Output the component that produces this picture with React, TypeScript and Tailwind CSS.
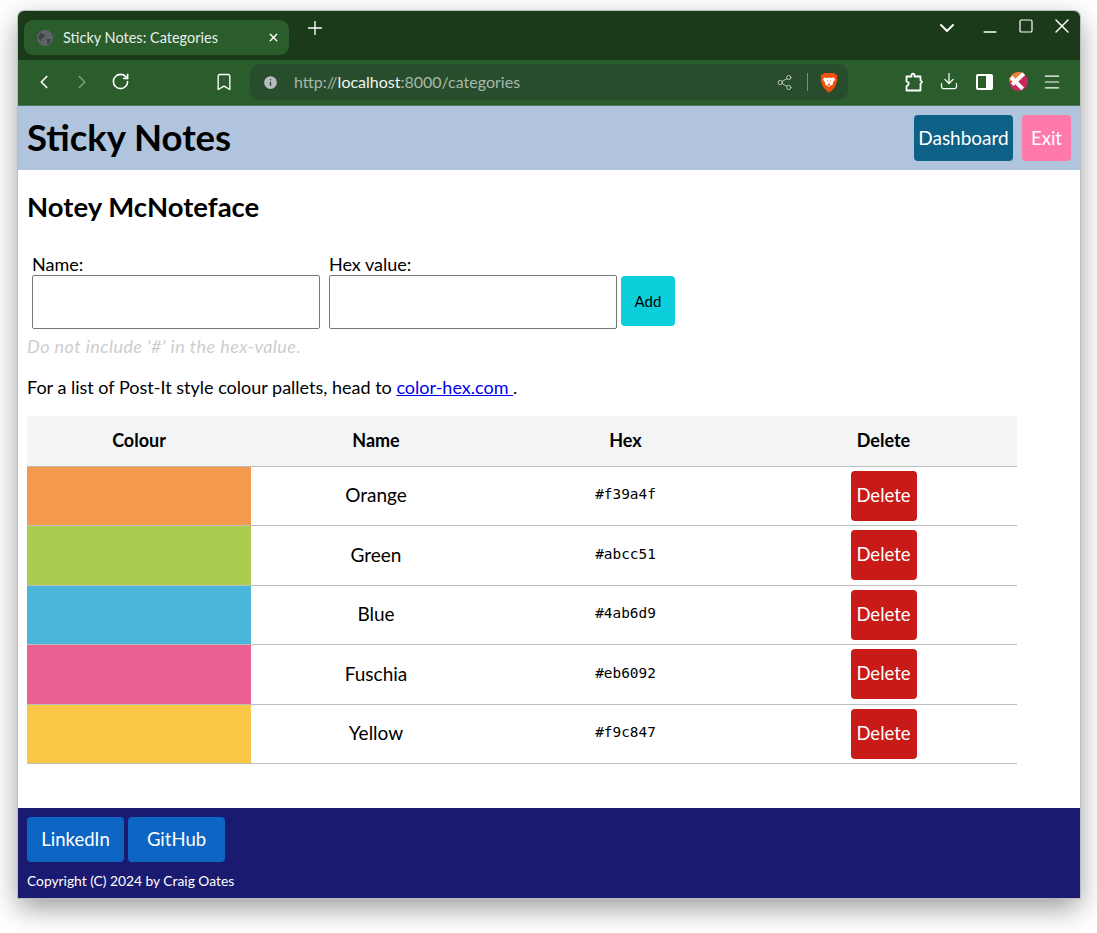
import { ChevronDown, ChevronLeft, ChevronRight, Download, Menu, Plus, RotateCw, Bookmark, Share2, Minus, Square, X, Info } from 'lucide-react';

const categories = [
  { name: 'Orange', hex: '#f39a4f', rowClass: 'h-[59px]' },
  { name: 'Green', hex: '#abcc51', rowClass: 'h-[60px]' },
  { name: 'Blue', hex: '#4ab6d9', rowClass: 'h-[59px]' },
  { name: 'Fuschia', hex: '#eb6092', rowClass: 'h-[60px]' },
  { name: 'Yellow', hex: '#f9c847', rowClass: 'h-[59px]' },
];

function BraveIcon() {
  return (
    <svg width="18" height="21" viewBox="0 0 18 21">
      <path d="M4 1h10l1.500 1.500L17.500 3 16.800 6 17.500 8 15 15l-4.500 4.500L9 20.500 7.500 19.500 3 15 .5 8 1.200 6 .5 3 2.500 2.500z" fill="#f1500f" />
      <path d="M4 5.500l3 .5 2-.5 2 .5 3-.5 1 2-2 3-.5 2.500-2 .5L9 15l-1.500-1.500-2-.5L5 10.500l-2-3z" fill="#fff" />
      <path d="M7 9h1M10 9h1M8 12h2l-1 1.500z" stroke="#f1500f" strokeWidth="1" fill="none" />
    </svg>
  );
}

function AvatarIcon() {
  return (
    <svg width="19" height="19" viewBox="0 0 18 18">
      <circle cx="9" cy="9" r="9" fill="#c4285f" />
      <path d="M0 9a9 9 0 0 1 9-9h3L7 9z" fill="#e9803c" />
      <path d="M2 5l11 11M14 1.500L3 12" stroke="#fff" strokeWidth="3.800" fill="none" />
    </svg>
  );
}

function ExtensionIcon() {
  return (
    <svg width="19" height="20" viewBox="0 0 19 20" fill="none" stroke="#fff" strokeWidth="1.800" strokeLinejoin="round">
      <path d="M1.500 4.500H6.500V2.500Q8 .8 9.500 2.500V4.500H15.500V8.500Q18.500 9.500 15.500 11.500V18.500H1.500V14.500Q4.500 12 3.500 10.500L1.500 9.500z" />
    </svg>
  );
}

function TabBar() {
  return (
    <div className="h-[49px] bg-[#1a3a1a] rounded-t-[6px] flex items-start pl-[6px] pr-[6px] pt-[9px] text-white">
      <div className="w-[265px] h-[35px] rounded-[9px] bg-[#2a5c2c] flex items-center pl-[13px] pr-[9px]">
        <svg width="16" height="16" viewBox="0 0 16 16" className="shrink-0">
          <circle cx="8" cy="8" r="8" fill="#5f6368" />
          <path d="M3 3l4 1 1 3-3 1-1 3-3-3zM10 9l4 0-2 5-2-1z" fill="#3e4347" />
        </svg>
        <span className="ml-[10px] text-[14.500px] text-[#e8efe8] flex-1">Sticky Notes: Categories</span>
        <X size={13} strokeWidth={2.500} />
      </div>
      <Plus size={22} strokeWidth={1.500} className="ml-[15px] mt-[-3px]" />
      <div className="ml-auto flex items-start">
        <ChevronDown size={24} strokeWidth={2} className="mt-[-4px]" />
        <Minus size={20} strokeWidth={1.800} className="ml-[21px] mt-[2px]" />
        <Square size={16} strokeWidth={1.800} className="ml-[18px] mt-[-2px]" />
        <X size={24} strokeWidth={1.500} className="ml-[16px] mt-[-6px]" />
      </div>
    </div>
  );
}

function Toolbar() {
  return (
    <div className="h-[46px] bg-[#2a5c2c] flex items-start pt-[4px] text-white border-b border-[#4a7a5a]">
      <ChevronLeft size={22} strokeWidth={1.800} className="ml-[15px] mt-[7px]" />
      <ChevronRight size={22} strokeWidth={1.800} className="ml-[16px] mt-[7px] text-[#7c9c7d]" />
      <RotateCw size={19} strokeWidth={2} className="ml-[18px] mt-[8px]" />
      <Bookmark size={20} strokeWidth={1.600} className="ml-[84px] mt-[8px]" />
      <div className="ml-[16px] w-[598px] h-[36px] rounded-[10px] bg-[#284d2c] flex items-center pl-[12px] pr-[10px] text-[16px]">
        <Info size={17} className="fill-[#b8bcc0] text-[#284d2c]" />
        <span className="ml-[15px] text-[#a9b8aa]">
          http://<span className="text-[#f1f5f1]">localhost</span>:8000/categories
        </span>
        <Share2 size={17} strokeWidth={1.300} className="ml-auto text-[#c5cdc5]" />
        <div className="w-px h-[18px] bg-[#7c8f7d] ml-[14px] mr-[12px]" />
        <BraveIcon />
      </div>
      <div className="ml-[57px] mt-[8px]"><ExtensionIcon /></div>
      <Download size={20} strokeWidth={1.500} className="ml-[15px] mt-[7px]" />
      <div className="ml-[17px] mt-[10px] w-[17px] h-[16px] border-2 border-white rounded-[2px] flex justify-end">
        <div className="w-[5px] bg-white" />
      </div>
      <div className="ml-[16px] mt-[8px]"><AvatarIcon /></div>
      <Menu size={20} strokeWidth={1.400} className="ml-[14px] mt-[8px]" />
    </div>
  );
}

export default function App() {
  return (
    <div className="min-h-[933px] bg-white pt-[11px] px-[18px] font-['Lato',sans-serif] text-black">
      <div className="w-[1062px] h-[887px] flex flex-col rounded-t-[6px] shadow-[0_0_0_1px_#bdbdbd,0_10px_28px_rgba(0,0,0,0.4)]">
        <TabBar />
        <Toolbar />
        <header className="h-[64px] bg-[#b0c4de] flex items-center justify-between pl-[9px] pr-[9px]">
          <h1 className="text-[36.500px] font-bold leading-[60px] pb-[3px]">Sticky Notes</h1>
          <div className="flex gap-[9px]">
            <button className="w-[99px] h-[46px] rounded-[4px] bg-[#0d6186] text-white text-[19px] pt-[1px]">Dashboard</button>
            <button className="w-[49px] h-[46px] rounded-[4px] bg-[#ff79ab] text-white text-[18.500px] pt-[1px]">Exit</button>
          </div>
        </header>
        <main className="flex-1 bg-white pl-[9px] pt-[19px]">
          <h2 className="text-[27.500px] font-bold leading-[36px]">Notey McNoteface</h2>
          <form className="mt-[29px] ml-[5px] flex items-end gap-[4px]">
            <label className="block text-[18px] leading-[21px]">
              Name:
              <input className="block w-[288px] h-[54px] border border-[#767676] rounded-[2px]" />
            </label>
            <label className="block ml-[5px] text-[18px] leading-[21px]">
              Hex value:
              <input className="block w-[288px] h-[54px] border border-[#767676] rounded-[2px]" />
            </label>
            <button type="button" className="w-[54px] h-[50px] mb-[3px] rounded-[4px] bg-[#0dcfdc] text-[15px]">Add</button>
          </form>
          <p className="mt-[5px] text-[18px] leading-[24px] italic tracking-[0.45px] text-[#cdcdcd]">Do not include '#' in the hex-value.</p>
          <p className="mt-[17px] text-[18px] leading-[24px]">
            For a list of Post-It style colour pallets, head to{' '}
            <a href="#" className="text-[#0000ee] underline">color-hex.com </a>.
          </p>
          <table className="mt-[17px] w-[990px] table-fixed border-collapse text-[19px]">
            <colgroup>
              <col className="w-[224px]" />
              <col className="w-[250px]" />
              <col className="w-[249px]" />
              <col className="w-[267px]" />
            </colgroup>
            <thead>
              <tr className="h-[50px] bg-[#f3f4f6] border-b border-[#bdbdbd] text-[18px]">
                <th className="font-bold">Colour</th>
                <th className="font-bold">Name</th>
                <th className="font-bold">Hex</th>
                <th className="font-bold">Delete</th>
              </tr>
            </thead>
            <tbody>
              {categories.map((c) => (
                <tr key={c.hex} className={`${c.rowClass} border-b border-[#bdbdbd]`}>
                  <td className="p-0" style={{ backgroundColor: c.hex }} />
                  <td className="text-center">{c.name}</td>
                  <td className="text-center font-['DejaVu_Sans_Mono',monospace] text-[14.400px] pb-[1px]">{c.hex}</td>
                  <td className="text-center">
                    <button className="w-[66px] h-[50px] align-middle rounded-[4px] bg-[#c81a17] text-white text-[18.500px]">Delete</button>
                  </td>
                </tr>
              ))}
            </tbody>
          </table>
        </main>
        <footer className="h-[90px] bg-[#1a1a70] pl-[9px] pt-[9px] text-white">
          <div className="flex gap-[4px]">
            <a className="w-[97px] h-[45px] rounded-[4px] bg-[#0c65c2] flex items-center justify-center text-[18.500px]">LinkedIn</a>
            <a className="w-[97px] h-[45px] rounded-[4px] bg-[#0c65c2] flex items-center justify-center text-[18.500px]">GitHub</a>
          </div>
          <p className="mt-[10px] text-[13.800px] leading-[18px]">Copyright (C) 2024 by Craig Oates</p>
        </footer>
      </div>
    </div>
  );
}
